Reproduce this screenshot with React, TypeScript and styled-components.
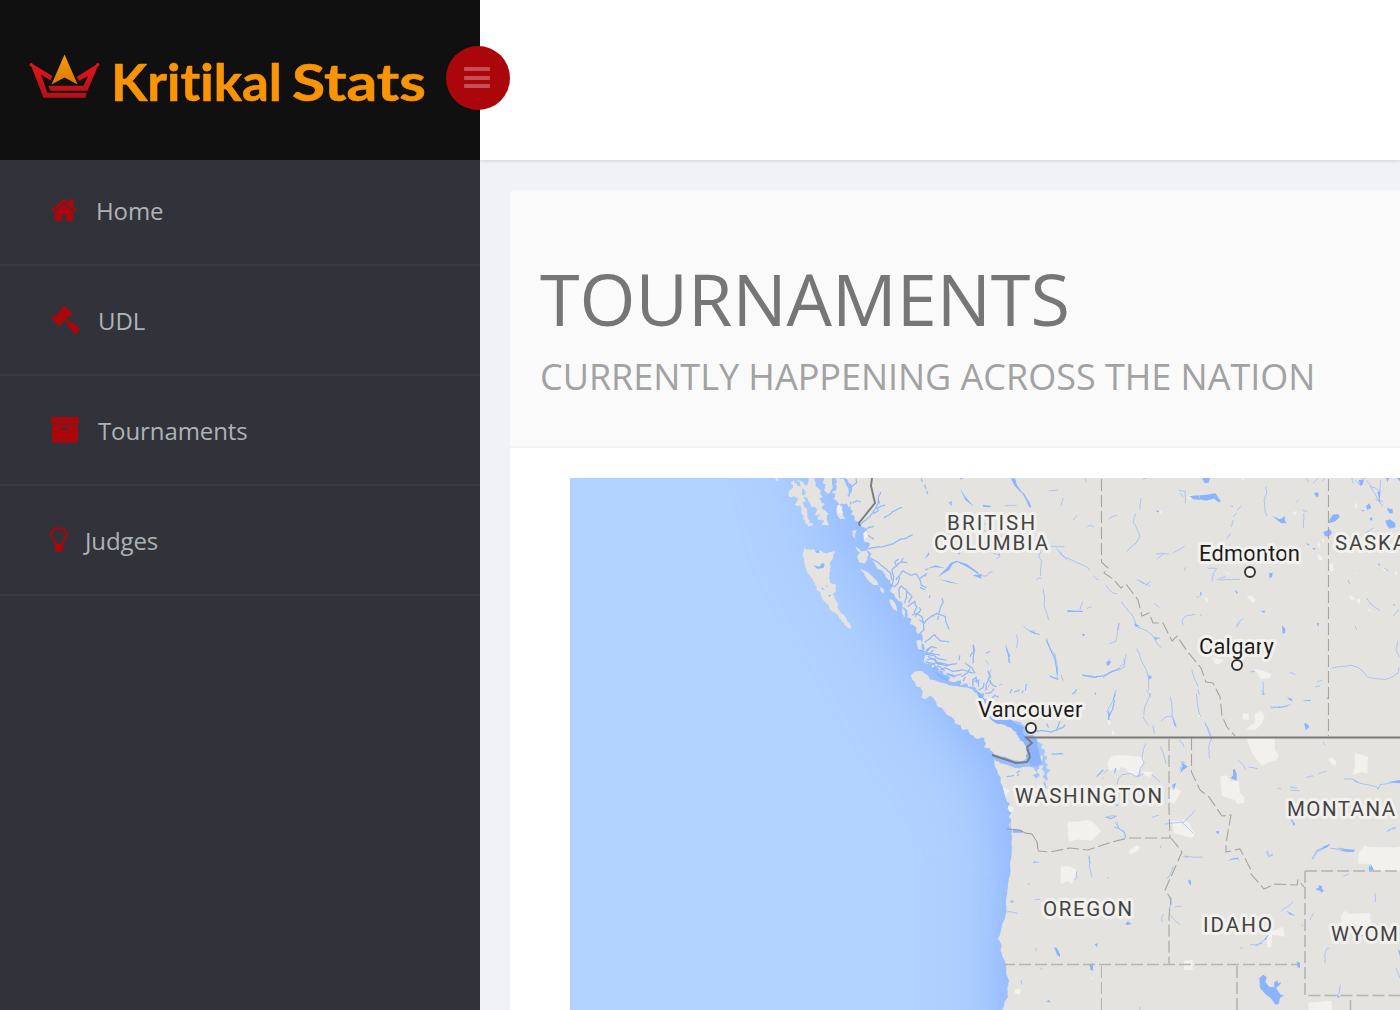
import React from "react";
import styled, { createGlobalStyle } from "styled-components";

const GlobalStyle = createGlobalStyle`
  *, *::before, *::after { box-sizing: border-box; }
  html, body { margin: 0; padding: 0; height: 100%; overflow: hidden; }
  body { font-family: "Open Sans", sans-serif; background: #f1f2f7; color: #767676; }
`;

const Shell = styled.div`
  display: grid;
  grid-template-columns: 480px minmax(0, 1fr);
  height: 1010px;
  overflow: hidden;
`;

const Sidebar = styled.aside`
  background: #32323a;
`;

const Brand = styled.div`
  position: relative;
  height: 160px;
  padding: 54px 0 0 29px;
  background: #101010;
`;

const Toggle = styled.button`
  position: absolute;
  top: 46px;
  right: -30px;
  z-index: 2;
  width: 64px;
  height: 64px;
  padding: 0 2px 1px 0;
  border: 0;
  border-radius: 50%;
  background: #ac060d;
  display: flex;
  flex-direction: column;
  align-items: center;
  justify-content: center;
  gap: 4.6px;
`;

const ToggleBar = styled.span`
  width: 26px;
  height: 4px;
  border-radius: 1px;
  background: #c54f55;
`;

const Menu = styled.nav`
  display: flex;
  flex-direction: column;
`;

const MenuItem = styled.a<{ $first?: boolean; $gap: number; $indent: number }>`
  display: flex;
  align-items: center;
  gap: ${(p) => p.$gap}px;
  height: ${(p) => (p.$first ? 106 : 110)}px;
  padding: ${(p) => (p.$first ? "0 0 2px" : "2px 0 0")} ${(p) => p.$indent}px;
  border-bottom: 2px solid #3b3b44;
  color: #aeb2b7;
  font-size: 24px;
  letter-spacing: -0.1px;
  line-height: 34px;
`;

const MenuIcon = styled.svg`
  flex: none;
  fill: #ac060d;
  overflow: visible;
  margin-top: -3px;
`;

const Main = styled.main`
  display: flex;
  flex-direction: column;
  min-width: 0;
`;

const TopBar = styled.header`
  flex: none;
  height: 160px;
  background: #fff;
  box-shadow: 0 1px 3px rgba(50, 50, 90, 0.16);
`;

const Content = styled.div`
  flex: 1;
  padding: 30px 0 0 30px;
`;

const Panel = styled.section`
  height: 100%;
  background: #fff;
  border-top-left-radius: 6px;
  overflow: hidden;
`;

const PanelHead = styled.div`
  height: 258px;
  padding: 58px 30px 0;
  background: #fafafa;
  border-bottom: 2px solid #eff2f7;
  text-transform: uppercase;
  white-space: nowrap;
`;

const Title = styled.h1`
  margin: 0;
  font-size: 72px;
  font-weight: 400;
  line-height: 100px;
  letter-spacing: -0.05px;
  color: #767676;
`;

const Subtitle = styled.p`
  margin: 0;
  padding-top: 4px;
  font-size: 36px;
  line-height: 50px;
  letter-spacing: -0.02px;
  color: #a2a2a2;
`;

const PanelBody = styled.div`
  padding: 30px 0 0 60px;
`;

const MapView = styled.svg`
  display: block;
  width: 830px;
  height: 532px;
`;

const MapText = styled.text<{ $city?: boolean }>`
  font-family: Roboto, sans-serif;
  font-size: ${(p) => (p.$city ? 22 : 20.5)}px;
  fill: ${(p) => (p.$city ? "#1c1c1c" : "#444")};
  stroke: #f2f1ee;
  stroke-width: 6px;
  stroke-linejoin: round;
  paint-order: stroke;
`;

const Wordmark = styled.text`
  font-family: Lato, sans-serif;
  font-weight: 700;
  font-size: 51px;
  font-variant-ligatures: none;
  fill: #f99406;
  stroke: #f99406;
  stroke-width: 0.6px;
  stroke-linejoin: round;
`;

/* ---- map geometry: each tile lists points at three units per pixel ---- */

type Pt = [number, number];
type Tile = { x: number; y: number; lines: string };

const parse = (x: number, y: number, s: string): Pt[] =>
  s.trim().split(/\s+/).map((p) => {
    const [a, b] = p.split(",").map(Number);
    return [x + a / 3, y + b / 3];
  });

const toPath = (pts: Pt[]) => "M" + pts.map((p) => `${p[0].toFixed(1)},${p[1].toFixed(1)}`).join("L");

const rough = (pts: Pt[], amp: number, seed = 7): Pt[] => {
  let s = seed;
  const rnd = () => {
    s = (s * 16807) % 2147483647;
    return s / 2147483647 - 0.5;
  };
  const out: Pt[] = [];
  for (let i = 0; i < pts.length - 1; i++) {
    const [a, b] = [pts[i], pts[i + 1]];
    const n = Math.max(1, Math.round(Math.hypot(b[0] - a[0], b[1] - a[1]) / 2.2));
    out.push(a);
    for (let k = 1; k < n; k++) {
      out.push([a[0] + ((b[0] - a[0]) * k) / n + rnd() * amp, a[1] + ((b[1] - a[1]) * k) / n + rnd() * amp]);
    }
  }
  out.push(pts[pts.length - 1]);
  return out;
};

const tilePath = (t: Tile, close = false) =>
  t.lines.split(";").filter((l) => l.trim()).map((l) => toPath(parse(t.x, t.y, l)) + (close ? "Z" : "")).join("");

const north = parse(760, 470,
  "258,20 266,38 276,50 276,64 268,82 276,100 271,112 279,122 272,133 284,140 286,152 299,158 303,168 316,174 322,190 312,200 311,213 322,216 328,229 320,240 334,252 330,268 346,284 362,300 376,320 390,330 396,348 390,362 402,372 412,388 426,396 432,412 442,424 440,442 455,448 450,462 463,468 468,482 482,490 488,502 484,518 495,535 492,548 512,550 493,566 494,578 508,580 516,594 532,594 536,606");
const sound = parse(900, 640,
  "116,96 128,92 132,104 150,110 146,122 166,126 184,122 180,136 200,130 206,142 222,140 232,152 238,165 252,160 248,178 262,176 256,195 270,192 246,207 266,222 276,236 296,242 315,236 340,244 362,246 378,260 396,278 374,288 396,293 412,290 410,305 428,312 424,326 436,332 430,346 442,350 434,362 445,374 439,384 452,390 440,402 445,418 434,425 440,442 434,452 430,430 438,418 428,410 434,398 424,388 430,376 418,378 410,395 420,404 406,416 398,406 412,398 402,384 382,380 350,384 320,374 290,364 282,356 284,376 290,388 299,408 305,434 312,450 316,466 320,486 330,490 322,508 334,518 326,530 334,540 326,552 333,566 337,590");
const south = parse(980, 820,
  "98,28 120,34 97,38 94,70 96,98 90,130 91,160 84,190 82,220 78,246 80,270 74,298 66,316 61,340 53,356 64,372 62,394 69,412 79,440 78,458 87,484 82,508 84,530 74,545 67,575");
const coast = [...rough(north, 3.2, 11), ...rough(sound, 1.6, 23), ...rough(south, 0.8, 31)];
const coastPath = toPath(coast);
const mainland = coastPath + "L1404,1015L1404,474L846,474Z";

const blob = (x: number, y: number, s: string, amp: number, seed: number) => {
  const p = parse(x, y, s);
  return toPath(rough([...p, p[0]], amp, seed)) + "Z";
};

const islands = [
  blob(760, 470, "134,228 137,238 160,236 168,250 178,241 196,250 216,246 226,236 224,250 213,272 208,310 210,338 225,342 229,362 218,372 226,390 232,396 232,412 240,424 256,440 262,454 272,466 271,478 258,468 246,455 236,440 220,426 208,414 200,400 188,390 182,370 168,358 170,350 158,330 150,320 138,300 133,274 129,262", 1.8, 41),
  blob(900, 640, "32,106 50,94 66,93 82,104 95,120 116,126 140,132 162,138 190,142 214,147 230,160 244,186 256,210 275,236 285,248 305,252 330,262 350,278 360,298 376,316 380,334 378,356 364,364 340,360 320,352 298,348 280,340 270,325 252,322 258,308 248,292 230,296 220,286 210,282 204,268 186,268 182,255 164,250 160,235 142,225 128,206 110,196 104,180 92,168 78,176 64,172 68,154 62,142 48,138", 1.7, 53),
  blob(760, 470, "103,24 112,48 128,52 126,74 138,92 126,98 140,118 142,140 158,168 145,170 136,150 126,132 120,108 104,104 114,84 96,72 86,70 100,52 92,40", 2.6, 61),
  blob(760, 470, "116,24 140,48 146,24 160,24 166,48 178,58 188,82 176,88 196,102 184,112 206,130 200,144 206,166 184,168 192,150 174,150 180,132 164,134 172,118 152,106 144,86 130,80 136,64 122,50", 2.6, 67),
  blob(760, 470, "192,24 216,24 218,48 206,72 192,60 198,44 188,40", 1.6, 71),
  blob(760, 470, "226,24 250,24 258,44 266,58 262,76 272,94 266,112 258,100 240,104 230,92 220,84 230,70 216,68 230,54", 2.2, 73),
  blob(760, 470, "230,104 246,108 248,134 256,148 242,148 232,136", 1.4, 79),
  blob(760, 470, "276,182 290,180 284,194 288,210 278,196", 1, 83),
  blob(760, 470, "292,262 300,246 320,242 326,256 316,280 302,278", 1.8, 89),
  blob(760, 470, "302,296 316,302 336,318 350,332 356,346 340,344 322,328", 1, 97),
  blob(760, 470, "388,388 398,390 408,406 412,424 400,418 392,404", 0.8, 101),
  blob(760, 470, "469,512 480,516 486,542 474,538", 0.8, 103),
  blob(760, 470, "428,412 436,424 432,444 426,430", 0.8, 105),
  blob(760, 470, "84,72 96,70 98,82 88,80", 0.8, 107),
  blob(760, 470, "286,228 298,238 308,246 294,244", 0.8, 109),
  blob(760, 470, "46,24 54,24 56,34 48,32", 0.4, 113),
  blob(760, 470, "358,348 370,356 372,370 362,364", 0.8, 127),
  blob(900, 640, "50,2 62,0 66,28 54,28", 0.8, 131),
  blob(900, 640, "394,326 400,328 398,344 392,338", 0.5, 137),
  blob(900, 640, "408,324 414,330 412,344 406,338", 0.5, 139),
  blob(900, 640, "423,344 429,350 426,366 421,356", 0.5, 141),
].join("");

const rivers: Tile[] = [
  { x: 760, y: 470, lines: "302,162 330,140 345,118 356,100 355,84 362,66;340,132 355,122 352,114 376,104;322,238 342,232 370,230 400,222 420,208 440,204 458,194;372,144 388,134 404,122 426,112;484,26 488,36;494,44 498,56;320,176 342,168;324,196 342,208;276,50 290,38 288,26;278,100 290,92 302,96;332,264 352,276 370,290 392,310 396,330;396,352 402,320 396,300 410,286 424,276 430,264;412,290 404,276 416,268;424,276 442,278;408,330 430,302 452,316 470,312 480,330 484,346 500,352;390,342 404,350 414,340 420,320;420,384 416,360 424,348 440,360 440,382 434,400;446,398 456,380 440,362;444,410 464,394 470,412 462,430;456,436 470,430 486,440 492,460 500,450 520,436 536,430 542,410 550,396 546,384;518,440 530,430 556,440 560,462 568,478;536,438 534,450;480,490 492,480 490,458 478,450;466,440 482,420 478,412;494,518 514,502 524,494 540,512 568,516;498,542 514,530 530,534;496,552 520,556 540,568 560,570;500,570 525,566 530,580 560,588 590,580;512,584 530,578 548,584;540,600 556,594 580,604 610,600 640,610;520,540 512,550 540,556;630,560 644,540 640,524;600,556 598,570;500,62 504,72;480,326 500,310 496,320;566,100 574,96 574,106;556,210 600,252;504,296 496,300;480,352 496,360;510,376 508,384;616,580 636,594 646,610;560,610 586,618 604,612;640,636 656,630 656,650;600,28 608,24;648,620 652,640" },
  { x: 980, y: 470, lines: "206,62 234,60;244,106 250,84;280,150 292,136;322,172 330,166 342,170;74,108 86,106 110,106;0,160 30,162;4,180 40,186 66,200;48,266 60,260 58,250;168,330 176,324 184,326;182,318 184,270 176,262 184,240;190,356 194,380 192,406 200,430 206,450;212,228 240,230 254,230;230,236 250,260 270,268 290,278 320,290 330,302;240,244 262,270;340,318 356,330;376,344 400,370 410,370;416,460 412,490 408,514 388,522;418,460 416,480;110,494 114,510 110,534;78,524 84,552 90,580;130,468 158,488 180,494;150,484 168,482;200,504 206,526 226,556 232,590 232,626;212,618 236,628;306,614 340,618;34,598 24,628 32,640 20,660;18,572 26,582;56,646 66,642;244,614 250,632;300,420 308,396;320,416 334,410;386,148 400,138 410,136;468,130 460,154 470,176 480,198 468,220 450,234 440,244;480,118 484,84;490,28 500,24;596,60 616,64 616,100;600,68 610,80;528,252 546,250 566,252;530,268 550,252;580,248 600,238 614,228;614,302 618,292;470,328 490,338 510,348;496,346 512,334;424,394 440,416 460,440 470,470 500,482 520,500;524,504 534,524 544,532;524,506 540,504;524,400 538,412;470,536 478,550 486,576 500,602 506,622 506,660;500,616 514,618;610,464 606,450 620,436 646,434;370,624 396,602 420,600 434,590 432,566;420,590 434,580 438,552;378,584 386,572 392,564;388,580 380,578;636,598 642,620 654,650;650,384 658,378;316,24 320,38;0,316 20,318 30,306 38,306;40,250 60,254;0,216 20,222" },
  { x: 1200, y: 470, lines: "198,50 200,70 192,92 196,128 200,138;112,120 124,108;92,108 100,110;100,150 94,170;80,206 92,190;110,130 100,140;340,40 352,26;366,34 374,26;288,98 298,88;308,120 322,124;312,130 310,174;22,294 50,296 40,310 36,334;50,330 76,320;60,330 120,328;90,270 94,254 104,250;110,472 122,450 130,446;110,468 116,456;456,24 460,40;466,30 478,44;484,30 498,24;500,30 518,60 530,80 540,100;510,48 544,64;542,30 540,60 538,94 548,108;526,88 550,96;496,190 520,174;394,594 420,590 456,586 480,596 492,608 504,622 530,626 556,628 580,620 594,610 598,592;500,384 512,402 540,422;594,512 588,540 598,560;552,294 566,302;598,418 580,438;444,330 450,342;466,468 470,480;190,634 190,674;212,714 240,712 264,708;240,714 238,708;266,684 278,694;310,692 332,692;346,650 360,648;350,636 366,630;150,606 164,604;268,606 286,614;16,760 28,790 36,810;320,24 326,36;188,674 196,672;0,436 6,434;350,460 356,464" },
  { x: 900, y: 640, lines: "320,24 326,44 328,68;322,30 330,50;440,0 450,24 466,60 472,102;450,108 474,118;632,64 622,76;660,84 640,94 610,108 580,112 548,106;530,148 524,160;516,162 526,156;584,158 588,164;220,16 222,40 218,70;264,92 272,110 260,130 256,152;270,120 278,136 290,140;258,40 270,34;184,110 204,98 210,86;190,124 196,110;220,138 218,120 230,112;236,150 250,142 252,128;256,160 272,158 282,146;272,178 284,166 296,172;330,160 336,148;342,156 360,150;366,158 370,152;454,342 490,342;380,132 376,152;644,180 638,208 626,232 624,240;640,180 646,160;400,274 430,272 452,276 472,270 490,262 496,254;440,250 446,262;470,270 480,244;320,410 342,406;350,398 360,392;356,402 352,408;590,410 610,390;644,400 648,384;620,530 632,536 650,528;60,30 80,36 90,24;76,64 100,72 116,90;84,48 112,66 146,76;96,88 116,78 134,92;126,118 146,104 164,112" },
  { x: 1100, y: 690, lines: "48,0 40,30 28,50 22,64 28,90;130,80 140,100 146,106;132,76 134,50 144,28 152,10;140,0 152,20;160,106 162,130;212,20 216,50 216,80 228,112;184,92 200,80 214,78;290,10 292,40 296,66 304,80;316,98 326,120 334,144 326,170 328,206;294,0 300,14;138,160 130,180 126,204 132,220 120,236 116,262;52,284 56,264 66,254 90,250 110,260 130,252;156,254 180,276;238,150 248,160 252,172;182,170 190,190 198,222;414,210 426,220 438,240;446,230 472,236;670,156 676,166;570,290 592,294;572,300 598,302;618,262 640,258;656,250 680,244;732,266 760,268 780,280 800,284 830,290 834,298 840,284 862,280 900,276;760,270 776,280;640,508 650,486 668,478 690,464;690,474 716,478 740,486 762,482;650,482 680,470;500,484 506,500;506,500 518,492;574,388 582,404;864,424 872,418;876,414 888,412;348,424 358,430;256,500 308,502;250,500 264,500;390,508 416,504;46,396 58,416 74,430 76,444;16,382 44,376;156,382 176,376;220,300 218,284 228,282;194,402 226,398 252,396 268,380 286,360;246,396 280,430;240,240 250,214 256,220;10,250 24,240;6,268 12,262;534,294 544,296;44,412 56,414;488,0 490,14;512,50 540,52 572,44;180,474 184,466" },
  { x: 980, y: 820, lines: "92,0 92,28;330,106 328,136 336,172;326,110 332,130;160,128 178,126;142,194 150,190;164,240 180,238;80,276 96,276 114,280;168,394 170,384;124,480 126,494;180,446 188,448;414,6 414,24 432,34 438,50 428,60;402,20 412,26;290,154 292,172 284,178;552,282 546,290 546,306;570,284 580,296 600,314;584,262 604,258;568,232 576,248 566,270;560,176 568,170 580,140;382,172 388,176;616,104 622,112;480,560 480,570;628,178 628,192" },
  { x: 1190, y: 820, lines: "366,118 378,92 400,84 416,74;444,84 470,90 496,90;306,0 314,16;232,92 238,106;240,108 248,106;116,122 144,114;128,114 148,120;590,36 600,28 618,24;460,170 476,162;556,220 556,246;274,272 292,260 310,246;290,274 314,286;360,300 370,280;180,374 204,376 210,370 224,360 234,346;150,384 160,384;196,376 216,370;406,430 404,404 412,384 418,386;452,494 446,520 442,532;626,388 630,408;618,444 626,464 630,474;334,314 340,318;250,500 272,486" },
];

const lakes: Tile[] = [
  { x: 980, y: 470, lines: "92,24 106,26 110,44 120,58 130,72 132,76 118,62 104,48;130,66 138,80 148,96 154,112 148,112 138,90 130,76;8,104 34,108 30,112 10,110;628,78 658,76 660,90 640,88;526,122 538,122 536,128;262,420 284,422 308,422 308,426 262,426;142,480 162,486 178,494 160,490;306,492 316,492 310,500;518,500 536,504 528,510;462,460 480,468 466,470;380,574 392,574 386,588;504,618 518,620 506,630;474,326 494,342 490,342" },
  { x: 1200, y: 470, lines: "6,24 30,24 26,38 14,40;0,76 20,74 46,70 62,92 58,98 42,86 18,92 0,88;216,138 240,148 256,138 254,150 260,160 244,160;342,70 354,66 356,78 350,82;388,150 398,134 414,132 420,140 406,154 388,160;370,186 390,178 396,188 386,200 374,198;318,220 328,222 326,228;336,234 346,234 344,240;208,310 218,308 216,322 208,324;104,360 114,366 110,372;182,422 196,422 192,430;246,466 256,476 256,488 248,492;350,460 358,460 354,470;0,364 6,370 2,380;498,108 508,100 514,114 502,120;510,142 518,144 516,152 510,150;560,114 578,118 578,130 568,130;556,152 570,148 586,160 586,172 568,176 560,164;484,120 492,120 490,126;532,280 540,282 538,288;476,30 492,30 488,44 480,48;486,40 480,44;532,66 540,64 540,98;558,24 568,24 562,36;580,402 586,404 582,408;312,760 322,762 328,770 318,780;268,684 278,694 270,690;378,684 386,682 384,688;590,24 600,24 600,34" },
  { x: 1100, y: 690, lines: "242,212 252,222 264,230 250,240 240,250 248,226;398,240 404,236 410,252 410,272 396,266 392,264 400,256;348,424 358,424 352,432;612,98 628,110 616,120 618,108;690,474 720,480 756,480 760,486 734,484;214,50 218,76 230,112 222,104;560,22 576,26 574,34;610,30 634,30 630,34;664,472 690,462 680,474;218,284 228,280 222,300;864,276 900,270 900,280;812,522 812,540 822,540;24,60 32,74 26,82;576,390 584,400 582,408;42,340 56,344 50,348" },
  { x: 980, y: 820, lines: "222,382 230,384 240,402 240,410 232,406;436,312 444,304 454,312 442,316;328,434 338,428 340,452 332,450;344,372 354,370 350,382;198,544 208,540 212,548;88,246 100,240 100,248;624,182 632,180 632,196;98,32 126,30 128,38 104,38;160,126 166,124 166,130" },
  { x: 1190, y: 820, lines: "208,474 220,464 230,472 226,486 238,500 254,502 252,488 262,480 264,490 274,488 266,498 258,504 264,512 272,524 282,526 270,534 266,552 256,554 244,536 226,522 210,504;376,206 386,204 386,196 396,198 396,206 402,212 394,218 390,212 380,210;320,424 330,428 330,444 322,442;78,36 88,32 86,40;0,180 4,190 0,198;222,358 236,344 228,360;306,4 314,12 312,18;446,84 470,88 494,90 490,96 466,92;538,136 544,144 542,154 536,150;510,342 520,344 516,350;624,390 630,394 630,408;440,524 450,530 444,534;292,276 312,286 300,284" },
  { x: 760, y: 470, lines: "600,54 616,80 640,108 636,106 616,90;532,322 560,294 572,278 590,272 620,282 656,308 654,312 620,290 592,276 578,282 568,300;500,296 526,286 554,294 524,292;536,328 562,332 598,342 570,338;638,316 664,312 664,326;494,268 506,246 508,254;160,286 178,290 188,278 194,284 190,294 172,296;352,100 356,84 360,100;196,344 206,352 200,350;184,350 194,360 186,358;204,376 214,374 210,380;166,246 176,240 178,250" },
  { x: 900, y: 640, lines: "100,92 116,100 140,114 146,124 122,116;246,210 276,234 300,242 340,248 372,262 366,280 340,264 306,252 278,244;344,276 362,288 376,300 378,312 366,302;374,286 400,286 412,300 410,320 418,344 424,362 414,378 390,378 392,350 384,330;620,66 632,68 624,76;578,110 596,106 590,114;232,152 246,164 256,184 262,196 248,206 240,180" },
];

const parks: Tile[] = [
  { x: 1100, y: 690, lines: "22,218 34,198 74,196 130,200 132,212 122,234 110,256 90,252 76,234 52,230 28,244;126,244 158,246 150,262 134,256;440,146 524,146 524,178 536,194 530,210 508,216 488,228 470,210 454,184;360,260 380,256 392,274 416,272 420,310 434,322 432,338 412,342 404,330 366,318;764,188 804,200 802,250 784,246 758,254 764,228;684,210 696,202 710,216 704,230;204,302 220,290 244,302 222,342 206,332;216,394 242,392 250,388 268,400 276,418 284,430 276,444 222,430;88,480 110,466 120,470 116,480 92,494 88,490;776,520 792,470 880,474 900,470 900,540 812,540 812,522;438,118 466,96 464,72 484,62 494,80 486,100 466,120;428,70 446,70 446,90 428,88;20,80 32,100 26,106;36,118 44,130 36,136;292,74 304,76 296,82" },
  { x: 980, y: 820, lines: "262,10 286,6 320,0 336,4 364,34 342,46 334,62 294,58 268,66;242,140 266,138 290,150 276,192 264,184 242,192;612,422 638,420 638,450 612,450;104,508 122,506 120,524 104,520;526,430 534,430 530,440;332,474 340,472 336,480" },
  { x: 1190, y: 820, lines: "454,284 466,272 478,282 540,278 542,304 546,340 524,348 502,350 488,332 454,322;354,548 424,542 426,570 356,570;246,334 280,320 284,350 246,344 244,382 232,382 230,352;506,100 526,76 536,86 600,82 630,84 630,152 544,152 544,132 504,130;0,22 12,42 12,52 0,48" },
  { x: 900, y: 640, lines: "504,544 536,546 562,540 604,572 578,600 504,596;624,366 636,350 660,346 660,390 628,386;308,440 330,452 316,470;620,234 628,240 626,258;584,160 588,176;324,498 340,502 340,514 328,516;578,106 600,104 590,116" },
  { x: 1200, y: 470, lines: "278,126 290,124 284,138;352,252 368,262 368,272 354,268;364,208 372,206 372,222;352,222 360,218 358,238;386,282 400,280 400,302 390,304;76,304 92,314 80,312;140,380 156,376 166,390 158,400;12,380 26,388 22,398;446,376 462,380 464,390 454,390;470,388 480,386 480,400 472,400;462,108 470,96 472,120;500,420 508,416 518,428;462,310 468,308 466,314;548,294 560,296 556,306;584,302 594,310 586,316;36,562 72,570 54,584 44,580;160,596 190,602 214,612 208,624 184,628 172,610;122,24 134,24 132,32;90,272 100,278 92,286;10,90 24,86 20,96;236,72 246,80" },
  { x: 980, y: 470, lines: "342,616 360,616 350,628;528,122 546,124 544,132;620,80 636,72 630,92" },
  { x: 760, y: 470, lines: "230,112 238,102 244,116 250,130 234,128;310,190 318,182 324,198 312,210" },
];

const borders = {
  thin: [
    "M1101.5,479V562L1108,568L1104,573L1113,579L1121,588L1126,584L1138,600L1142,616L1149,613L1153,623H1163L1172,641L1177,636L1187,651L1201,668L1206,682L1213,683L1220,697L1222,716L1227,727L1235,736",
    "M1328.500,479V736",
    "M1191.500,738V772L1200,790L1209,797L1222,816L1231,815L1226,843L1226,852L1240,849L1251,870L1251,874L1264,889L1275,884L1297,885L1298,880L1305,888",
    "M1169,739V810L1170,838H1128L1112,842L1088,850L1070,848L1050,852L1038,851",
    "M1171,838L1182,852L1165,890L1171,899L1169,916V964",
    "M1305,871H1400M1305,871V995.500H1400",
    "M1003,964.500H1298",
    "M1101.500,966V1010",
    "M1237,966V1010",
    "M1350.500,1000V1010",
  ],
  solid: [
    "M872,478L871,486L875,503L859,523L860,526",
    "M1400,737.500H1026L1032,743L1027,747L1030,757L1027,762L1016,763L992,755",
  ],
};

type Label = { text: string; x: number; y: number; w: number; city?: boolean };
const labels: Label[] = [
  { text: "BRITISH", x: 947, y: 530, w: 88 },
  { text: "COLUMBIA", x: 934, y: 550, w: 114 },
  { text: "SASKA", x: 1335, y: 550, w: 71 },
  { text: "Edmonton", x: 1199, y: 561, w: 101, city: true },
  { text: "Calgary", x: 1199, y: 654, w: 75, city: true },
  { text: "Vancouver", x: 978, y: 717, w: 104.5, city: true },
  { text: "WASHINGTON", x: 1015, y: 803, w: 147 },
  { text: "MONTANA", x: 1287, y: 816, w: 108 },
  { text: "OREGON", x: 1043, y: 916, w: 89 },
  { text: "IDAHO", x: 1203, y: 932, w: 69 },
  { text: "WYOM", x: 1331, y: 941, w: 67 },
];
const cities: Pt[] = [[1250, 572], [1237, 665], [1031, 728]];

const NationMap = () => (
  <MapView viewBox="570 478 830 532">
    <defs>
      <filter id="deep" filterUnits="userSpaceOnUse" x="400" y="200" width="1100" height="1100" colorInterpolationFilters="sRGB"><feGaussianBlur stdDeviation="32" /></filter>
      <filter id="shelf" filterUnits="userSpaceOnUse" x="400" y="200" width="1100" height="1100" colorInterpolationFilters="sRGB"><feGaussianBlur stdDeviation="12" /></filter>
    </defs>
    <rect x="570" y="478" width="830" height="532" fill="#b1d1ff" />
    <path d="M822,380L856,520L912,610L950,680L1014,765L1030,830L1030,1100" fill="none" stroke="#94bbff" strokeOpacity="0.850" strokeWidth="78" filter="url(#deep)" />
    <path d="M810,400L878,530L921,610L951,685L1006,765L1016,820L1018,880L1013,950L1015,1080" fill="none" stroke="#8cb6ff" strokeOpacity="0.550" strokeWidth="26" filter="url(#shelf)" />
    <path d={mainland} fill="#e5e3df" />
    <path d="M1026,737L1012,720L984,710L990,724L1012,732L1022,748L1030,764L1042,764L1036,740Z" fill="#8ab4fb" />
    <path d={islands} fill="#e5e3df" />
    {parks.map((t, i) => <path key={i} d={tilePath(t, true)} fill="#f2f1ed" />)}
    {rivers.map((t, i) => (
      <path key={i} d={t.lines.split(";").map((l) => toPath(rough(parse(t.x, t.y, l), 0.7, i + 3))).join("")}
        fill="none" stroke="#8ab4ff" strokeWidth={i === 0 || i === 3 ? 1.2 : 0.9} strokeOpacity={i === 0 || i === 3 ? 0.95 : 0.75} />
    ))}
    {lakes.map((t, i) => <path key={i} d={tilePath(t, true)} fill="#8ab4ff" />)}
    {borders.thin.map((d, i) => (
      <path key={i} d={d} fill="none" stroke={i >= 5 ? "#b5b4b2" : "#a5a4a2"} strokeWidth={i >= 5 && i !== 7 ? 1.6 : 1.1} strokeDasharray="12 4" />
    ))}
    <path d="M1007,829L1020,830L1025,833L1032,834L1037,842L1038,850" fill="none" stroke="#969696" />
    {borders.solid.map((d, i) => <path key={i} d={d} fill="none" stroke="#7d7b7a" strokeWidth="1.900" />)}
    {labels.map((l) => (
      <MapText key={l.text} $city={l.city} x={l.x} y={l.y} textLength={l.w}>{l.text}</MapText>
    ))}
    {cities.map(([x, y]) => (
      <circle key={x} cx={x} cy={y} r="5" fill="#f4f3f1" stroke="#343434" strokeWidth="1.900" />
    ))}
  </MapView>
);

const Logo = () => (
  <svg width="400" height="64" viewBox="29 54 400 64" role="img" aria-label="Kritikal Stats">
    <defs>
      <linearGradient id="gold" x1="0" y1="0" x2="0" y2="1">
        <stop offset="0" stopColor="#fb9a03" /><stop offset="1" stopColor="#d97906" />
      </linearGradient>
      <linearGradient id="ruby" gradientUnits="userSpaceOnUse" x1="0" y1="63" x2="0" y2="98">
        <stop offset="0" stopColor="#e5151b" /><stop offset="1" stopColor="#b01119" />
      </linearGradient>
    </defs>
    <path fill="url(#gold)" d="M64.500,54.500L77.700,84.500L64.500,77.500L51.500,84.500Z" />
    <path fill="url(#ruby)" d="M30.500,64L32,63.800L52.500,76L50.500,80.500L41,74.500L47.300,92.800H87L85.300,97.800H43.500Z" />
    <path fill="url(#ruby)" d="M98.300,65L97,64.200L76.500,77L79.300,80.800L88,76.300L83.500,85.800H48.300L50.300,90.800H87.500Z" />
    <circle cx="31.200" cy="64.800" r="1.700" fill="#df1820" /><circle cx="97.700" cy="64.800" r="1.700" fill="#df1820" />
    <Wordmark x="111" y="100.500" textLength="171" lengthAdjust="spacingAndGlyphs">Kritikal</Wordmark>
    <Wordmark x="292" y="100.500" textLength="134" lengthAdjust="spacingAndGlyphs">Stats</Wordmark>
  </svg>
);

const HomeIcon = () => (
  <MenuIcon width="26" height="22" viewBox="16 253 1632 1283" preserveAspectRatio="none">
    <path d="M1408 992v480q0 26-19 45t-45 19h-384v-384h-256v384h-384q-26 0-45-19t-19-45v-480q0-1 .5-3t.5-3l575-474l575 474q1 2 1 6zM1631 923l-62 74q-8 9-21 11h-3q-13 0-21-7l-692-577l-692 577q-12 8-24 7q-13-2-21-11l-62-74q-8-10-7-23.500t11-21.500l719-599q32-26 76-26t76 26l244 204v-195q0-14 9-23t23-9h192q14 0 23 9t9 23v408l219 182q10 8 11 21.500t-7 23.500z" />
  </MenuIcon>
);
const GavelIcon = () => (
  <MenuIcon width="29" height="29" viewBox="0 0 1792 1792">
    <path d="M1771 1536q0 53-37 90l-107 108q-39 37-91 37q-53 0-90-37l-363-364q-38-36-38-90q0-53 43-96l-256-256l-126 126q-14 14-34 14t-34-14q2 2 12.500 12t12.500 13t10 11.500t10 13.500t6 13.500t5.500 16.500t1.500 18q0 38-28 68q-3 3-16.500 18t-19 20.500t-18.500 16.500t-22 15.500t-22 9t-26 4.500q-40 0-68-28l-408-408q-28-28-28-68q0-13 4.500-26t9-22t15.500-22t16.500-18.500t20.500-19t18-16.500q30-28 68-28q10 0 18 1.500t16.500 5.500t13.500 6t13.500 10t11.500 10t13 12.500t12 12.500q-14-14-14-34t14-34l348-348q14-14 34-14t34 14q-2-2-12.500-12t-12.500-13t-10-11.500t-10-13.500t-6-13.500t-5.500-16.500t-1.500-18q0-38 28-68q3-3 16.500-18t19-20.500t18.500-16.500t22-15.500t22-9t26-4.500q40 0 68 28l408 408q28 28 28 68q0 13-4.500 26t-9 22t-15.500 22t-16.500 18.500t-20.500 19t-18 16.500q-30 28-68 28q-10 0-18-1.500t-16.500-5.500t-13.500-6t-13.500-10t-11.500-10t-13-12.500t-12-12.500q14 14 14 34t-14 34l-126 126l256 256q43-43 96-43q52 0 91 37l363 363q37 39 37 91z" />
  </MenuIcon>
);
const ArchiveIcon = () => (
  <MenuIcon width="28" height="26" viewBox="0 0 28 26">
    <rect width="28" height="6.600" rx="1.200" />
    <path fillRule="evenodd" d="M1,7.600H27V24.600Q27,25.600 26,25.600H2Q1,25.600 1,24.600ZM11.600,11Q10.600,11 10.600,12T11.600,13H16.200Q17.200,13 17.200,12T16.200,11Z" />
  </MenuIcon>
);
const BulbIcon = () => (
  <MenuIcon width="18" height="26" viewBox="0 0 18 26">
    <path fill="none" stroke="#ac060d" strokeWidth="2" d="M5.600,17C5.200,13 1,11.500 1,7.300C1,3.500 4.500,1 8.800,1S16.700,3.500 16.700,7.300C16.700,11.500 12.500,13 12.100,17" />
    <path d="M4.600,16.500H13.200V21.500L11.500,24.400L8.900,25.400L6.200,24.400L4.600,21.500Z" />
    <path fill="none" stroke="#ac060d" strokeWidth="1.500" d="M8.800,4.800Q11,5 12,7" />
  </MenuIcon>
);

const menu = [
  { name: "Home", Icon: HomeIcon, gap: 19, indent: 51 },
  { name: "UDL", Icon: GavelIcon, gap: 18, indent: 51 },
  { name: "Tournaments", Icon: ArchiveIcon, gap: 19, indent: 51 },
  { name: "Judges", Icon: BulbIcon, gap: 17, indent: 50 },
];

export default function App() {
  return (
    <>
      <GlobalStyle />
      <Shell>
        <Sidebar>
          <Brand>
            <Logo />
            <Toggle aria-label="Toggle navigation">
              <ToggleBar /><ToggleBar /><ToggleBar />
            </Toggle>
          </Brand>
          <Menu>
            {menu.map(({ name, Icon, gap, indent }, i) => (
              <MenuItem key={name} $first={i === 0} $gap={gap} $indent={indent}>
                <Icon />
                <span>{name}</span>
              </MenuItem>
            ))}
          </Menu>
        </Sidebar>
        <Main>
          <TopBar />
          <Content>
            <Panel>
              <PanelHead>
                <Title>Tournaments</Title>
                <Subtitle>Currently happening across the nation</Subtitle>
              </PanelHead>
              <PanelBody>
                <NationMap />
              </PanelBody>
            </Panel>
          </Content>
        </Main>
      </Shell>
    </>
  );
}
